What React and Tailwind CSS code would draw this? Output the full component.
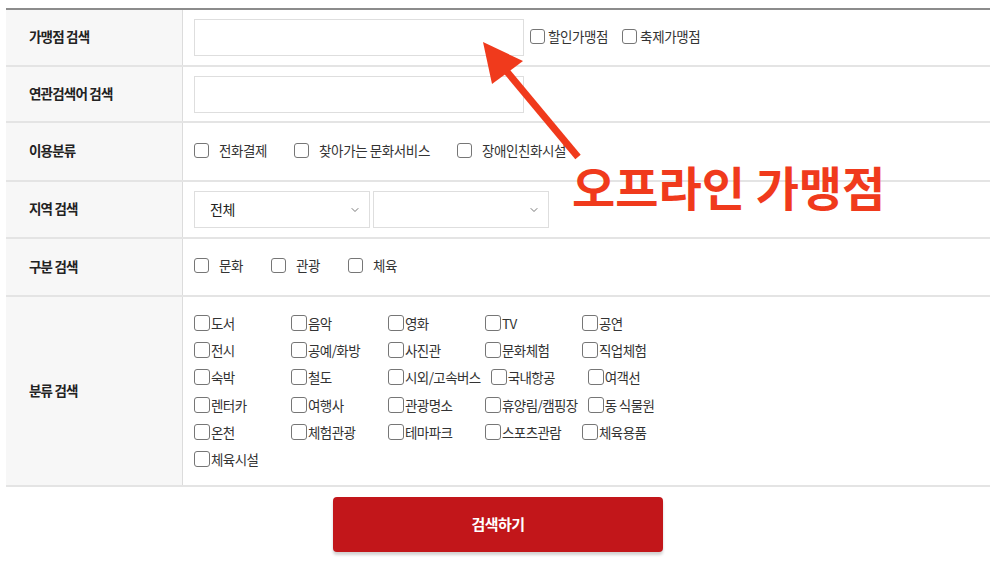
import React from "react";
import { ChevronDown } from "lucide-react";

const FONT = { fontFamily: '"Noto Sans CJK KR", "Noto Sans", sans-serif' };

const categories = [
  "도서", "음악", "영화", "TV", "공연",
  "전시", "공예/화방", "사진관", "문화체험", "직업체험",
  "숙박", "철도", "시외/고속버스", "국내항공", "여객선",
  "렌터카", "여행사", "관광명소", "휴양림/캠핑장", "동 식물원",
  "온천", "체험관광", "테마파크", "스포츠관람", "체육용품",
  "체육시설",
];

const Box = ({ size = "w-[15px] h-[15px]" }) => (
  <span className={`${size} shrink-0 rounded-[3px] border border-[#767676] bg-white`} />
);

// 체크박스 + 라벨 (간격 있는 버전)
const Check = ({ label, className = "" }) => (
  <label className={`flex items-center gap-[10px] text-[13.5px] tracking-[-0.4px] text-[#333] ${className}`}>
    <Box />
    <span>{label}</span>
  </label>
);

const Row = ({ label, height, children }) => (
  <div className={`flex border-b-2 border-[#e4e4e4] ${height}`}>
    <div className="w-[177px] shrink-0 bg-[#f7f7f7] border-r border-[#dcdcdc] flex items-center pl-[23px] pb-[2px] text-[13.5px] font-semibold tracking-[-0.8px] text-[#222]">
      {label}
    </div>
    <div className="flex-1 flex items-center pl-[11px]">{children}</div>
  </div>
);

const Select = ({ value, width }) => (
  <div className={`${width} h-[37px] border border-[#dedede] bg-white flex items-center justify-between pl-[15px] pr-[8px] text-[14px] tracking-[-0.3px] text-[#222]`}>
    <span>{value}</span>
    <ChevronDown size={12} strokeWidth={1.6} color="#555" />
  </div>
);

const App = () => {
  return (
    <div className="relative w-[1000px] h-[569px] bg-white overflow-hidden" style={FONT}>
      <div className="pt-[8px] pl-[6px] w-[990px]">
        <div className="w-[984px] border-t-2 border-[#8c8c8c]">
          <Row label="가맹점 검색" height="h-[57px]">
            <div className="w-[330px] h-[37px] border border-[#dedede] bg-white" />
            <Check label="할인가맹점" className="ml-[6px] !gap-[3px] mr-[14px] -mt-[2px]" />
            <Check label="축제가맹점" className="!gap-[3px] -mt-[2px]" />
          </Row>

          <Row label="연관검색어 검색" height="h-[56px]">
            <div className="w-[330px] h-[37px] border border-[#dedede] bg-white" />
          </Row>

          <Row label="이용분류" height="h-[59px]">
            <Check label="전화결제" className="mr-[27px] -mt-[3px]" />
            <Check label="찾아가는 문화서비스" className="mr-[27px] -mt-[3px]" />
            <Check label="장애인친화시설" className="-mt-[3px]" />
          </Row>

          <Row label="지역 검색" height="h-[57px]">
            <div className="flex gap-[3px]">
              <Select value="전체" width="w-[176px]" />
              <Select value="" width="w-[176px]" />
            </div>
          </Row>

          <Row label="구분 검색" height="h-[58px]">
            <Check label="문화" className="mr-[28px] -mt-[3px]" />
            <Check label="관광" className="mr-[28px] -mt-[3px]" />
            <Check label="체육" className="-mt-[3px]" />
          </Row>

          <Row label="분류 검색" height="h-[190px]">
            <div className="flex flex-wrap w-[500px]">
              {categories.map((c) => (
                <label
                  key={c}
                  className="flex items-center min-w-[97px] pr-[10px] h-[27.3px] text-[13.5px] tracking-[-0.6px] text-[#333]"
                >
                  <Box size="w-[16px] h-[16px]" />
                  <span className="ml-[1px]">{c}</span>
                </label>
              ))}
            </div>
          </Row>
        </div>

        <div className="flex justify-center mt-[10px]">
          <button className="w-[330px] h-[55px] rounded-[4px] bg-[#c2161a] text-white text-[15px] font-bold tracking-[-0.5px] shadow-[0_3px_3px_rgba(0,0,0,0.18)]">
            검색하기
          </button>
        </div>
      </div>

      {/* 빨간 화살표 주석 */}
      <svg className="absolute left-0 top-0 pointer-events-none" width="1000" height="569">
        <line x1="578" y1="157" x2="503" y2="67" stroke="#f03a1c" strokeWidth="7" />
        <polygon points="483,42 492,84 523,61" fill="#f03a1c" />
      </svg>
      <div className="absolute left-[572px] top-[162px] text-[47px] font-bold tracking-[0px] text-[#f03a1c] leading-none whitespace-nowrap">
        오프라인 가맹점
      </div>
    </div>
  );
};

export default App;
